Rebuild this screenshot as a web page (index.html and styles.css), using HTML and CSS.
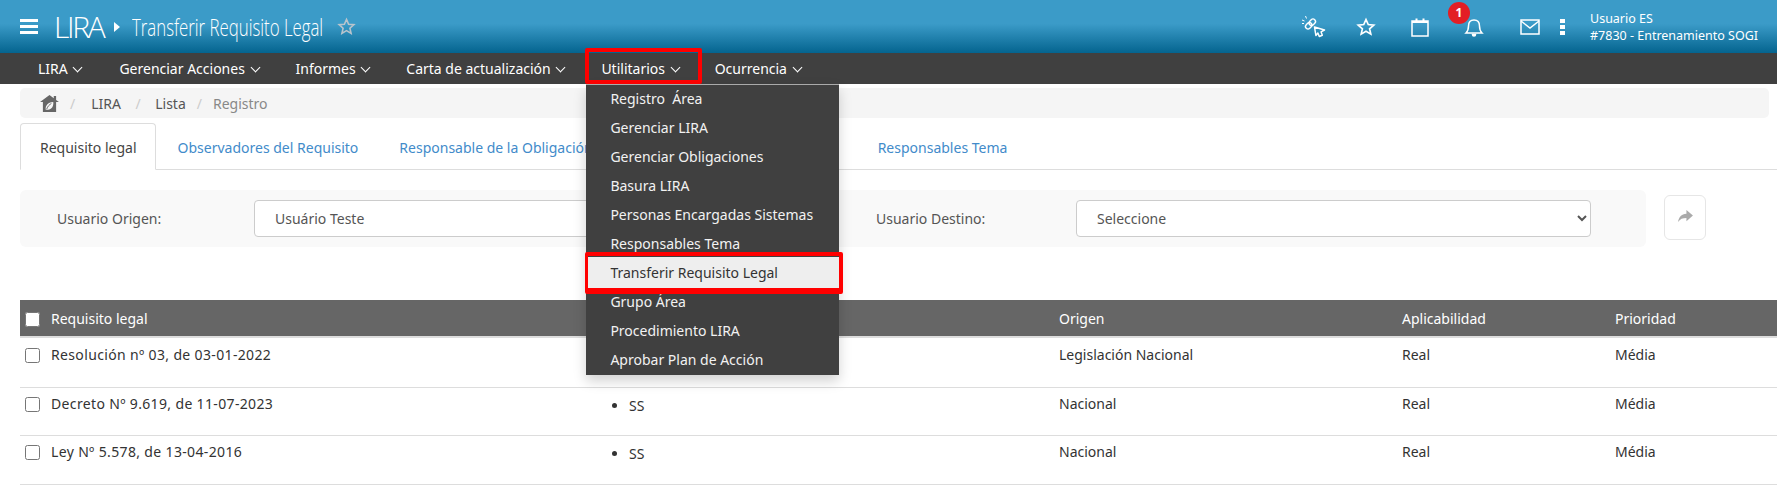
FILE: index.html
```html
<!DOCTYPE html>
<html lang="en">
<head>
  <meta charset="UTF-8">
  <title>Transferir Requisito Legal</title>
  <link rel="stylesheet" href="styles.css">
</head>
<body>
  <header class="topbar">
    <div class="menu-btn"><span></span><span></span><span></span></div>
    <span class="brand">LIRA</span>
    <span class="caret-right"></span>
    <span class="title-box"><span class="page-title">Transferir Requisito Legal</span></span>
    <svg class="title-star" viewBox="0 0 24 24" width="19" height="19"><path d="M12 3l2.700 6.100 6.600.6-5 4.400 1.500 6.500-5.800-3.400-5.800 3.400 1.500-6.500-5-4.400 6.600-.6z" fill="none" stroke="#b9c4cc" stroke-width="2"/></svg>
    <div class="top-icons">
      <svg class="ico ico-link" viewBox="0 0 24 24" width="24" height="24" fill="none" stroke="#fff" stroke-width="1.400"><g transform="rotate(-45 8.500 9)"><rect x="2.500" y="6.500" width="7" height="5" rx="2.500"/><rect x="7.500" y="6.500" width="7" height="5" rx="2.500"/></g><path d="M0 5l2.500 1M3.500 1l1 2.500M0 8.500h2" stroke-width="1"/><path d="M12.500 12l10 3-3.500 1.800 1.300 3.500-3 1.200-1.400-3.500-2 2.500z" stroke-width="1.500" stroke-linejoin="round"/></svg>
      <svg class="ico ico-star" viewBox="0 0 24 24" width="20" height="20" fill="none" stroke="#fff" stroke-width="2"><path d="M12 3l2.700 6.100 6.600.6-5 4.400 1.500 6.500-5.800-3.400-5.800 3.400 1.500-6.500-5-4.400 6.600-.6z"/></svg>
      <svg class="ico ico-cal" viewBox="0 0 20 20" width="20" height="20"><path d="M2 4h16v15H2z" fill="none" stroke="#fff" stroke-width="1.500"/><path d="M2 4h16v2H2zM5.500 1.500h2v3h-2zM12.500 1.500h2v3h-2z" fill="#fff"/></svg>
      <div class="bell-wrap">
        <svg viewBox="0 0 20 20" width="20" height="20" fill="none" stroke="#fff" stroke-width="1.500"><path d="M2 16c2-2 2.500-3.500 2.500-7C4.500 5 7 3 10 3s5.500 2 5.500 6c0 3.500.5 5 2.500 7z"/><path d="M8.500 17.500a1.500 1.500 0 0 0 3 0z" fill="#fff"/></svg>
        <span class="badge">1</span>
      </div>
      <svg class="ico ico-mail" viewBox="0 0 20 16" width="20" height="16" fill="none" stroke="#fff" stroke-width="1.500"><path d="M1 1h18v14H1z"/><path d="M1 2l9 7 9-7"/></svg>
      <div class="dots"><span></span><span></span><span></span></div>
    </div>
    <div class="user-box">
      <div>Usuario ES</div>
      <div>#7830 - Entrenamiento SOGI</div>
    </div>
  </header>

  <nav class="mainnav">
    <a class="nav-item item-lira">LIRA <i class="chev"></i></a>
    <a class="nav-item item-ger">Gerenciar Acciones <i class="chev"></i></a>
    <a class="nav-item item-inf">Informes <i class="chev"></i></a>
    <a class="nav-item item-carta">Carta de actualización <i class="chev"></i></a>
    <div class="nav-item item-util">
      Utilitarios <i class="chev"></i>
      <ul class="dropdown">
        <li>Registro &nbsp;Área</li>
        <li>Gerenciar LIRA</li>
        <li>Gerenciar Obligaciones</li>
        <li>Basura LIRA</li>
        <li>Personas Encargadas Sistemas</li>
        <li>Responsables Tema</li>
        <li class="active">Transferir Requisito Legal</li>
        <li>Grupo Área</li>
        <li>Procedimiento LIRA</li>
        <li>Aprobar Plan de Acción</li>
      </ul>
    </div>
    <a class="nav-item">Ocurrencia <i class="chev"></i></a>
  </nav>

  <div class="breadcrumb">
    <svg class="home" viewBox="0 0 20 18" width="21" height="17"><path d="M10 0L0 7.500h3V18h14V7.500h3l-3-2.300V1h-2.500v2.400z" fill="#666"/><path d="M6 15.500c-.5-4 2-7.500 8-8 .5 5-2 8.500-6.500 8z" fill="#f5f5f5"/><path d="M7 15c1-3 3-5 5-6" stroke="#666" stroke-width="1" fill="none"/></svg>
    <span class="sep sep-first">/</span><a>LIRA</a><span class="sep sep-wide">/</span><a>Lista</a><span class="sep sep-narrow">/</span><span class="current">Registro</span>
  </div>

  <div class="tabs">
    <a class="tab active">Requisito legal</a>
    <a class="tab tab-obs">Observadores del Requisito</a>
    <a class="tab tab-resp">Responsable de la Obligación</a>
    <a class="tab">Responsables Tema</a>
  </div>

  <div class="transfer-row">
    <form class="transfer-form">
      <label class="lbl-origin">Usuario Origen:</label>
      <div class="fake-input origin">Usuário Teste</div>
      <label class="lbl-dest">Usuario Destino:</label>
      <select class="fake-input dest"><option>Seleccione</option></select>
    </form>
    <button class="go-btn" type="button">
      <svg viewBox="0 0 16 14" width="15" height="13"><path d="M9 0l7 6-7 6V8.500C5 8.500 2 9.500 0 13c.5-5 3.500-8.500 9-9z" fill="#aaa"/></svg>
    </button>
  </div>

  <table class="grid">
    <thead>
      <tr>
        <th class="c-name"><input type="checkbox">Requisito legal</th>
        <th class="c-theme"></th>
        <th class="c-origin">Origen</th>
        <th class="c-appl">Aplicabilidad</th>
        <th>Prioridad</th>
      </tr>
    </thead>
    <tbody>
      <tr class="first-row">
        <td class="name"><input type="checkbox">Resolución nº 03, de 03-01-2022</td>
        <td></td>
        <td>Legislación Nacional</td>
        <td>Real</td>
        <td>Média</td>
      </tr>
      <tr>
        <td class="name"><input type="checkbox">Decreto Nº 9.619, de 11-07-2023</td>
        <td><ul class="areas"><li>SS</li></ul></td>
        <td>Nacional</td>
        <td>Real</td>
        <td>Média</td>
      </tr>
      <tr class="last-row">
        <td class="name"><input type="checkbox">Ley Nº 5.578, de 13-04-2016</td>
        <td><ul class="areas"><li>SS</li></ul></td>
        <td>Nacional</td>
        <td>Real</td>
        <td>Média</td>
      </tr>
    </tbody>
  </table>
</body>
</html>
```

FILE: styles.css
```css
*, *::before {
  box-sizing: border-box;
}
html, body {
  overflow: hidden;
}
body {
  margin: 0;
  background-color: #fff;
  color: #333;
  font-family: 'Noto Sans', sans-serif;
  font-size: 14px;
}
a {
  text-decoration: none;
}

/* top bar */
.topbar {
  height: 53px;
  display: flex;
  align-items: center;
  padding-left: 20px;
  color: #fff;
  background: linear-gradient(to bottom, #3b9bc8 0, #3b9bc8 45%, #04648f 100%);
}
.menu-btn {
  width: 18px;
  display: flex;
  flex-direction: column;
  gap: 3px;
  margin-right: 16px;
}
.menu-btn span {
  height: 3px;
  background-color: #fff;
}
.brand {
  font-family: 'Open Sans', sans-serif;
  font-weight: 300;
  font-size: 30px;
  letter-spacing: -2.300px;
  margin-right: 10px;
}
.caret-right {
  width: 0;
  height: 0;
  border-left: 6px solid #fff;
  border-top: 5px solid transparent;
  border-bottom: 5px solid transparent;
  margin-right: 12px;
}
.title-box {
  width: 205px;
  white-space: nowrap;
}
.page-title {
  display: inline-block;
  font-family: 'Open Sans', sans-serif;
  font-weight: 300;
  font-size: 24px;
  transform: scaleX(.7);
  transform-origin: left center;
}
.title-star {
  margin-right: auto;
}
.top-icons {
  display: flex;
  align-items: center;
}
.ico-link {
  margin-right: 30px;
}
.ico-star {
  margin-right: 34px;
}
.ico-cal {
  margin-right: 34px;
}
.bell-wrap {
  position: relative;
  height: 20px;
  margin-right: 36px;
}
.badge {
  position: absolute;
  left: -16px;
  top: -15px;
  width: 22px;
  height: 22px;
  line-height: 21px;
  border-radius: 50%;
  background-color: #e31e25;
  color: #fff;
  font-size: 12px;
  font-weight: 700;
  text-align: center;
}
.dots {
  display: flex;
  flex-direction: column;
  gap: 2px;
  margin-left: 20px;
  margin-right: 25px;
}
.dots span {
  width: 5px;
  height: 4px;
  background-color: #fff;
}
.user-box {
  width: 187px;
  font-size: 12.5px;
  line-height: 17px;
}

/* main nav */
.mainnav {
  height: 31px;
  display: flex;
  align-items: center;
  background-color: #404040;
  padding-left: 38px;
}
.nav-item {
  color: #fff;
  white-space: nowrap;
}
.item-lira {
  margin-right: 35px;
}
.item-ger {
  margin-right: 34px;
}
.item-inf {
  margin-right: 34px;
}
.item-carta {
  margin-right: 34px;
}
.chev {
  display: inline-block;
  width: 7px;
  height: 7px;
  margin: 0 3px 3px 3px;
  border-right: 1.500px solid #fff;
  border-bottom: 1.500px solid #fff;
  transform: rotate(45deg);
}
.item-util {
  position: relative;
  margin-right: 33px;
}
.item-util::before {
  content: "";
  position: absolute;
  left: -16px;
  top: -11px;
  width: 117px;
  height: 36px;
  border: 4px solid #f00;
  border-radius: 2px;
}
.dropdown {
  position: absolute;
  z-index: 5;
  left: -15px;
  top: 25px;
  width: 253px;
  margin: 0;
  padding: 0;
  list-style: none;
  background-color: #404040;
  border-top: 1px solid #aaa;
  box-shadow: 0 6px 12px rgba(0, 0, 0, .18);
}
.dropdown li {
  height: 29px;
  line-height: 27px;
  padding-left: 24px;
  color: #f2f2f2;
}
.dropdown li.active {
  position: relative;
  background-color: #eee;
  box-shadow: 0 -2px 0 #eee;
  color: #333;
}
.dropdown li.active::before {
  content: "";
  position: absolute;
  left: -1px;
  right: -4px;
  top: -7px;
  bottom: -6px;
  border-style: solid;
  border-color: #f00;
  border-width: 4px 4px 6px 3px;
  border-radius: 2px;
}

/* breadcrumb */
.breadcrumb {
  height: 30px;
  margin: 4px 8px 0 20px;
  padding: 1px 0 0 19px;
  display: flex;
  align-items: center;
  background-color: #f5f5f5;
  border-radius: 5px;
}
.breadcrumb a {
  color: #555;
}
.sep {
  color: #ccc;
  margin: 0 12px;
}
.sep-first {
  margin: 0 16px 0 10px;
}
.sep-wide {
  margin: 0 14.500px;
}
.sep-narrow {
  margin: 0 11px;
}
.current {
  color: #888;
}

/* tabs */
.tabs {
  height: 47px;
  margin: 5px 0 0 20px;
  display: flex;
  border-bottom: 1px solid #ddd;
}
.tab {
  height: 47px;
  padding: 14px 20px;
  color: #428bca;
  border: 1px solid transparent;
  margin-right: 1px;
}
.tab.active {
  padding-left: 19px;
  padding-right: 18px;
  background-color: #fff;
  color: #444;
  border-color: #ddd #ddd #fff;
  border-radius: 4px 4px 0 0;
}
.tab-obs {
  padding-right: 18px;
}
.tab-resp {
  margin-right: 243px;
}

/* form */
.transfer-row {
  display: flex;
  margin: 20px 0 0 20px;
}
.transfer-form {
  width: 1626px;
  height: 57px;
  display: flex;
  align-items: center;
  background-color: #f9f9f9;
  border-radius: 6px;
  padding-left: 37px;
  margin: 0;
}
.transfer-form label {
  color: #555;
}
.lbl-origin {
  width: 197px;
}
.lbl-dest {
  width: 200px;
  margin-left: 76px;
}
.fake-input {
  height: 37px;
  background-color: #fff;
  border: 1px solid #ccc;
  border-radius: 4px;
  color: #555;
  font-family: inherit;
  font-size: 14px;
  padding-left: 20px;
  line-height: 36px;
}
.origin {
  width: 546px;
}
.dest {
  width: 515px;
  padding: 0 0 0 16px;
}
.go-btn {
  width: 42px;
  height: 45px;
  margin: 5px 0 0 18px;
  background-color: #fff;
  border: 1px solid #e6e6e6;
  border-radius: 6px;
}

/* table */
.grid {
  width: 1757px;
  margin: 53px 0 0 20px;
  border-collapse: collapse;
  table-layout: fixed;
}
.grid th {
  height: 37px;
  background-color: #666;
  color: #fff;
  font-weight: 400;
  text-align: left;
  padding: 0;
  border-bottom: 2px solid #ddd;
}
.grid td {
  height: 48px;
  vertical-align: top;
  padding: 6px 0 0 0;
  border-bottom: 1px solid #ddd;
}
.first-row td {
  height: 50px;
  padding-top: 7px;
}
.last-row td {
  height: 49px;
}
.grid input[type=checkbox] {
  width: 15px;
  height: 15px;
  margin: 0 11px 0 5px;
  vertical-align: -3px;
}
.name {
  letter-spacing: .35px;
}
.c-name {
  width: 591px;
}
.c-theme {
  width: 448px;
}
.c-origin {
  width: 343px;
}
.c-appl {
  width: 213px;
}
.areas {
  margin: 2px 0 0 0;
  padding-left: 18px;
}
```
